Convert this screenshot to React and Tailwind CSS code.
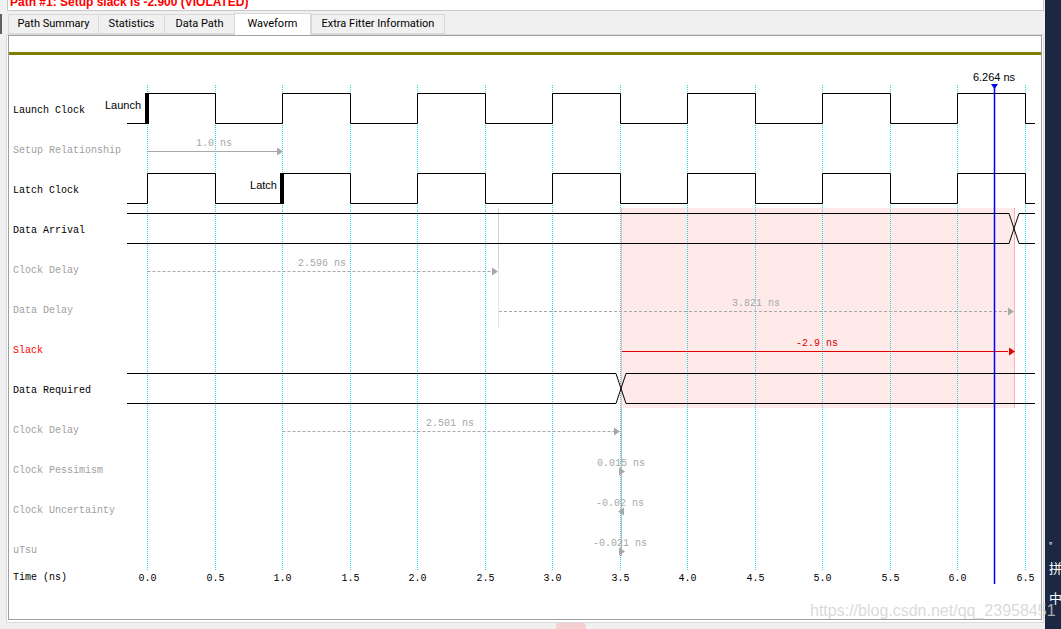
const X = (t) => Math.round(147 + 135 * t) + 0.5;
const TICKS = [0, 0.5, 1, 1.5, 2, 2.5, 3, 3.5, 4, 4.5, 5, 5.5, 6, 6.5];

const tabs = [
  { name: "Path Summary", w: "w-[91px]" },
  { name: "Statistics", w: "w-[67px]" },
  { name: "Data Path", w: "w-[71px]" },
  { name: "Waveform", w: "w-[77px]", active: true },
  { name: "Extra Fitter Information", w: "w-[134px]" },
];

const rows = [
  { label: "Launch Clock", tone: "text-black" },
  { label: "Setup Relationship", tone: "text-[#a0a0a0]" },
  { label: "Latch Clock", tone: "text-black" },
  { label: "Data Arrival", tone: "text-black" },
  { label: "Clock Delay", tone: "text-[#a0a0a0]" },
  { label: "Data Delay", tone: "text-[#a0a0a0]" },
  { label: "Slack", tone: "text-[#ff0000]" },
  { label: "Data Required", tone: "text-black" },
  { label: "Clock Delay", tone: "text-[#a0a0a0]" },
  { label: "Clock Pessimism", tone: "text-[#a0a0a0]" },
  { label: "Clock Uncertainty", tone: "text-[#a0a0a0]" },
  { label: "uTsu", tone: "text-[#a0a0a0]" },
];

function clockPath(hi, lo) {
  let d = `M127 ${lo} H${X(0)}`;
  for (let k = 0; k <= 6; k++) {
    d += ` V${hi} H${X(k + 0.5)} V${lo}`;
    if (k < 6) d += ` H${X(k + 1)}`;
  }
  return d + " H1035";
}

function ArrowR({ x, y, fill = "#a8a8a8" }) {
  return <polygon points={`${x - 6},${y - 4} ${x},${y} ${x - 6},${y + 4}`} fill={fill} />;
}

function ArrowL({ x, y, fill = "#a8a8a8" }) {
  return <polygon points={`${x + 5},${y - 4} ${x - 1},${y} ${x + 5},${y + 4}`} fill={fill} />;
}

const mono = "font-['Liberation_Mono',monospace] text-[10px]";
const sans = "font-['Liberation_Sans',Arial,sans-serif] text-[11px]";

function Waveform() {
  const gray = "#a8a8a8";
  return (
    <svg width="922" height="564" viewBox="118 55 922 564" className="block overflow-visible">
      {/* violation window */}
      <rect x="621" y="208" width="393" height="200" fill="#ffeaea" />
      <line x1="621.5" y1="208" x2="621.5" y2="408" stroke="#ffb8b8" />
      <line x1="1014.5" y1="208" x2="1014.5" y2="408" stroke="#ffb0b0" />

      {/* grid */}
      {TICKS.map((t) => (
        <line key={t} x1={X(t)} y1="85" x2={X(t)} y2="570" stroke="#22d8e6" strokeDasharray="1 1" />
      ))}

      {/* helper verticals */}
      <line x1="498.5" y1="208" x2="498.5" y2="268" stroke="#d0d0d0" />
      <line x1="498.5" y1="268" x2="498.5" y2="328" stroke="#e6e6e6" />
      <line x1="621.5" y1="408" x2="621.5" y2="556" stroke="#b8b8b8" />

      {/* launch clock */}
      <path d={clockPath(93.5, 123.5)} fill="none" stroke="#000" />
      <rect x="145" y="93" width="4" height="31" fill="#000" />
      <text x="141" y="109" textAnchor="end" className={sans} fill="#000">Launch</text>

      {/* setup relationship */}
      <line x1={X(0)} y1="151.5" x2="277" y2="151.5" stroke={gray} />
      <ArrowR x={283} y={151.5} />
      <text x="214" y="146" textAnchor="middle" className={mono} fill={gray}>1.0 ns</text>

      {/* latch clock */}
      <path d={clockPath(173.5, 203.5)} fill="none" stroke="#000" />
      <rect x="280" y="173" width="4" height="31" fill="#000" />
      <text x="277" y="189" textAnchor="end" className={sans} fill="#000">Latch</text>

      {/* data arrival */}
      <path d="M127 213.5 H1009 L1019 243.5 H1035 M127 243.5 H1009 L1019 213.5 H1035" fill="none" stroke="#000" />

      {/* clock delay */}
      <line x1={X(0)} y1="271.5" x2="492" y2="271.5" stroke={gray} strokeDasharray="3 2" />
      <ArrowR x={498} y={271.5} />
      <text x="322" y="266" textAnchor="middle" className={mono} fill={gray}>2.596 ns</text>

      {/* data delay */}
      <line x1="499" y1="311.5" x2="1008" y2="311.5" stroke={gray} strokeDasharray="3 2" />
      <ArrowR x={1014} y={311.5} />
      <text x="756" y="306" textAnchor="middle" className={mono} fill={gray}>3.821 ns</text>

      {/* slack */}
      <line x1="622" y1="351.5" x2="1008" y2="351.5" stroke="#e00000" />
      <ArrowR x={1015} y={351.5} fill="#e00000" />
      <text x="817" y="346" textAnchor="middle" className={mono} fill="#e00000">-2.9 ns</text>

      {/* data required */}
      <path d="M127 373.5 H616 L626 403.5 H1035 M127 403.5 H616 L626 373.5 H1035" fill="none" stroke="#000" />

      {/* clock delay 2 */}
      <line x1={X(1)} y1="431.5" x2="614" y2="431.5" stroke={gray} strokeDasharray="3 2" />
      <ArrowR x={620} y={431.5} />
      <text x="450" y="426" textAnchor="middle" className={mono} fill={gray}>2.501 ns</text>

      {/* pessimism / uncertainty / uTsu */}
      <ArrowR x={625} y={471.5} />
      <text x="621" y="466" textAnchor="middle" className={mono} fill={gray}>0.015 ns</text>
      <ArrowL x={619} y={511.5} />
      <text x="620" y="506" textAnchor="middle" className={mono} fill={gray}>-0.02 ns</text>
      <ArrowR x={625} y={551.5} />
      <text x="620" y="546" textAnchor="middle" className={mono} fill={gray}>-0.021 ns</text>

      {/* time axis */}
      {TICKS.map((t) => (
        <text key={t} x={X(t)} y="581" textAnchor="middle" className={mono} fill="#000">
          {t.toFixed(1)}
        </text>
      ))}

      {/* cursor */}
      <line x1="994.5" y1="85" x2="994.5" y2="584" stroke="#0000ff" strokeWidth="1.5" />
      <polygon points="991,84 998,84 994.5,89" fill="#0000ff" />
      <text x="994" y="81" textAnchor="middle" className={sans} fill="#000">6.264 ns</text>
    </svg>
  );
}

export default function App() {
  return (
    <div className="relative w-[1061px] h-[629px] overflow-hidden bg-[#f0f0f0] flex">
      <div className="w-[1045px] flex flex-col">
        {/* header */}
        <div className="ml-[7px] mr-[1px] h-[11px] bg-white border-x border-b border-[#c8c8c8] overflow-hidden flex items-start">
          <span className="pl-[2px] -mt-[4px] text-[12px] leading-[12px] font-bold text-[#ff0000] whitespace-nowrap font-['Liberation_Sans',Arial,sans-serif]">
            Path #1: Setup slack is -2.900 (VIOLATED)
          </span>
        </div>

        {/* tabs */}
        <div className="relative mt-[2px] h-[21px] flex items-end pl-[8px]">
          <div className="absolute left-0 top-[1px] w-[2px] h-[20px] bg-[#606060]" />
          {tabs.map((tab) =>
            tab.active ? (
              <div
                key={tab.name}
                className={`${tab.w} h-[22px] -mb-[1px] z-10 bg-white border border-b-0 border-[#d9d9d9] flex items-center justify-center text-[11px] text-black font-['Roboto',sans-serif]`}
              >
                {tab.name}
              </div>
            ) : (
              <div
                key={tab.name}
                className={`${tab.w} h-[20px] -mr-[1px] bg-[#f0f0f0] border border-[#d9d9d9] flex items-center justify-center text-[11px] text-black font-['Roboto',sans-serif]`}
              >
                {tab.name}
              </div>
            )
          )}
        </div>

        {/* panel */}
        <div className="ml-[6px] w-[1038px] h-[589px] border border-[#d9d9d9] bg-white px-[1px] pb-[2px]">
          <div className="h-full border border-[#a0a0a0] bg-white flex flex-col">
            <div className="mt-[16px] h-[3px] bg-[#808000]" />
            <div className="flex">
              <div className="w-[109px] pl-[4px] pt-[35px] flex flex-col font-['Liberation_Mono',monospace] text-[10px] whitespace-nowrap">
                {rows.map((r, i) => (
                  <div key={i} className={`h-[40px] flex items-center ${r.tone}`}>
                    {r.label}
                  </div>
                ))}
                <div className="h-[14px] flex items-center text-black">Time (ns)</div>
              </div>
              <Waveform />
            </div>
          </div>
        </div>
      </div>

      {/* taskbar strip */}
      <div className="w-[16px] h-full bg-[#1c2843] flex flex-col items-start justify-end pb-[16px] pl-[4px] text-white font-['Noto_Sans_CJK_SC',sans-serif] text-[13px] leading-[30px] overflow-hidden">
        <span className="text-[9px] leading-[14px]">°</span>
        <span>拼</span>
        <span>中</span>
      </div>

      {/* watermark */}
      <div className="absolute left-[810px] top-[599px] text-[16px] text-[#d0d0d0]/80 font-['Liberation_Sans',Arial,sans-serif] whitespace-nowrap pointer-events-none">
        https://blog.csdn.net/qq_23958451
      </div>
      <div className="absolute left-[556px] top-[623px] w-[30px] h-[6px] rounded-t-[3px] bg-[#f6d0d0]" />
    </div>
  );
}
